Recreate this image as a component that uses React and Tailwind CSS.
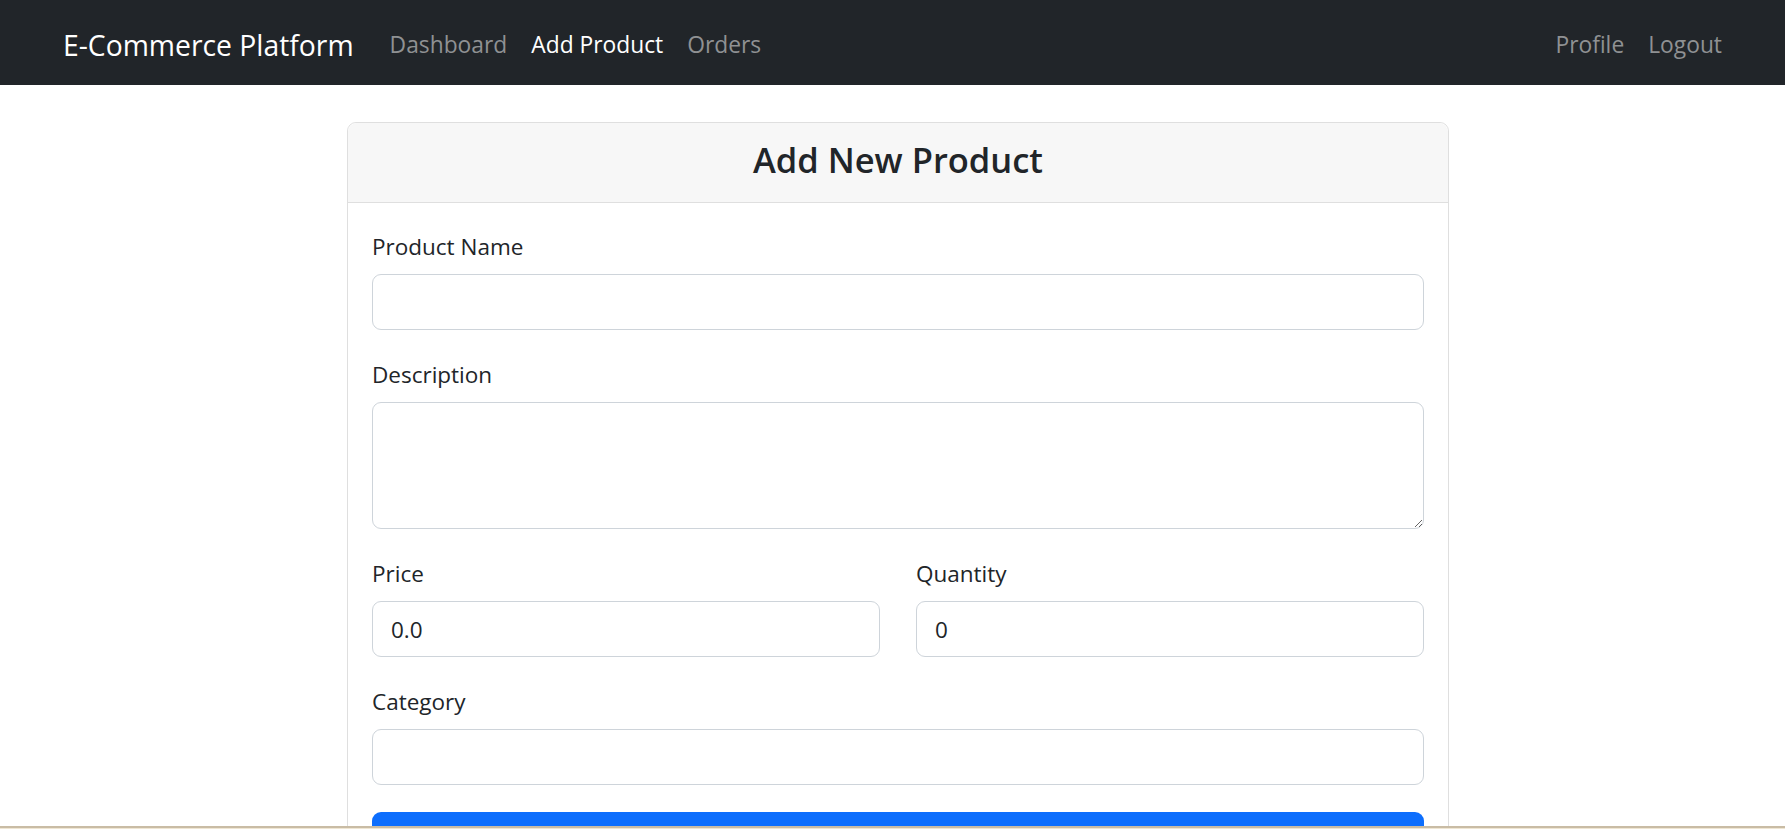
import React, { useState } from "react";

const navLinks = [
  { label: "Dashboard", active: false },
  { label: "Add Product", active: true },
  { label: "Orders", active: false },
];

const inputClass =
  "block w-full h-[56px] px-[18px] text-[22.5px] text-[#212529] bg-white border border-[#ced4da] rounded-[9px] outline-none";

const Field = ({ label, children }) => (
  <div className="mb-[27px]">
    <label className="block mb-[9px] text-[22.5px] leading-[36px] text-[#212529]">{label}</label>
    {children}
  </div>
);

const App = () => {
  const [form, setForm] = useState({
    name: "",
    description: "",
    price: "0.0",
    quantity: "0",
    category: "",
  });

  const update = (key) => (e) => setForm({ ...form, [key]: e.target.value });

  return (
    <div className="min-h-screen bg-white font-['Open_Sans',sans-serif]">
      <nav className="h-[85px] bg-[#212529] flex items-center justify-between pl-[63px] pr-[51px] pt-[5px]">
        <div className="flex items-center">
          <a href="#" className="text-[28.3px] text-white mr-[24px] leading-[45px]">
            E-Commerce Platform
          </a>
          <ul className="flex items-center">
            {navLinks.map((link) => (
              <li key={link.label}>
                <a
                  href="#"
                  className={`block px-[12px] text-[22.8px] ${
                    link.active ? "text-white" : "text-[#8f9193]"
                  }`}
                >
                  {link.label}
                </a>
              </li>
            ))}
          </ul>
        </div>
        <ul className="flex items-center">
          <li>
            <a href="#" className="block px-[12px] text-[22.8px] text-[#8f9193]">Profile</a>
          </li>
          <li>
            <a href="#" className="block px-[12px] text-[22.8px] text-[#8f9193]">Logout</a>
          </li>
        </ul>
      </nav>

      <div className="flex justify-center pt-[37px] pl-[11px]">
        <div className="w-[1102px] border border-[#dfdfdf] rounded-[9px] bg-white">
          <div className="h-[80px] bg-[#f7f7f7] border-b border-[#dfdfdf] rounded-t-[9px] flex items-center justify-center pb-[6px]">
            <h3 className="text-[34.5px] font-semibold text-[#212529]">Add New Product</h3>
          </div>
          <form className="px-[24px] pt-[26px] pb-[24px]" onSubmit={(e) => e.preventDefault()}>
            <Field label="Product Name">
              <input className={inputClass} value={form.name} onChange={update("name")} />
            </Field>
            <Field label="Description">
              <textarea
                rows={3}
                className="block w-full h-[127px] px-[18px] py-[9px] text-[22.5px] text-[#212529] bg-white border border-[#ced4da] rounded-[9px] outline-none"
                value={form.description}
                onChange={update("description")}
              />
            </Field>
            <div className="grid grid-cols-2 gap-x-[36px]">
              <Field label="Price">
                <input className={inputClass} value={form.price} onChange={update("price")} />
              </Field>
              <Field label="Quantity">
                <input className={inputClass} value={form.quantity} onChange={update("quantity")} />
              </Field>
            </div>
            <Field label="Category">
              <input className={inputClass} value={form.category} onChange={update("category")} />
            </Field>
            <button
              type="submit"
              className="block w-full h-[57px] bg-[#0d6efd] text-white text-[22.5px] rounded-[9px]"
            >
              Add Product
            </button>
          </form>
        </div>
      </div>

      <div className="fixed bottom-0 left-0 right-0 h-[3px] bg-[#c9bca5] border-b border-[#efe6d3]" />
    </div>
  );
};

export default App;
